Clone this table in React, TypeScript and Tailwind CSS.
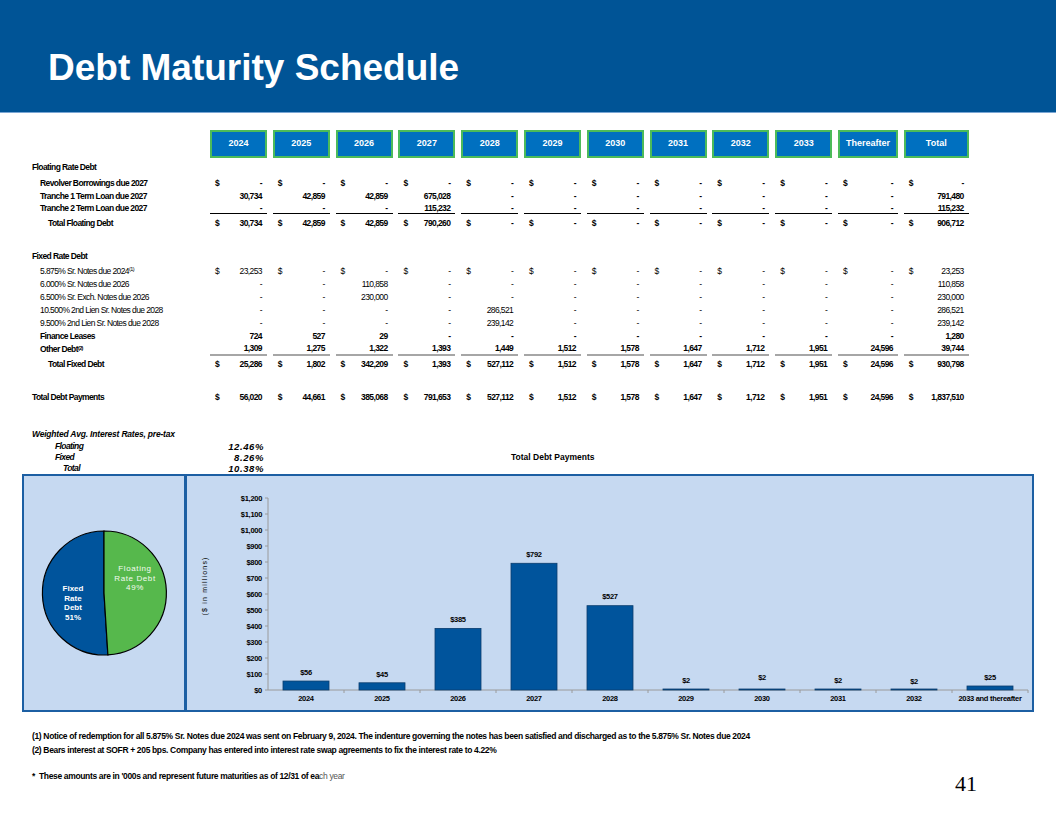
import React from "react";

type Row = {
  label: string;
  sup?: string;
  values: string[];
  dollar?: boolean;
  indent: string;
  bold?: boolean;
  size: string;
  line?: "black" | "gray";
};

const years = ["2024", "2025", "2026", "2027", "2028", "2029", "2030", "2031", "2032", "2033", "Thereafter", "Total"];

const dashes = (n: number) => Array.from({ length: n }, () => "-");

const floatingRows: Row[] = [
  { label: "Revolver Borrowings due 2027", values: dashes(12), dollar: true, indent: "pl-[40px]", bold: true, size: "mt-[3px] h-[13px]" },
  { label: "Tranche 1 Term Loan due 2027", values: ["30,734", "42,859", "42,859", "675,028", ...dashes(7), "791,480"], indent: "pl-[40px]", bold: true, size: "h-[13.5px]" },
  { label: "Tranche 2 Term Loan due 2027", values: ["-", "-", "-", "115,232", ...dashes(7), "115,232"], indent: "pl-[40px]", bold: true, size: "h-[11px]", line: "black" },
  { label: "Total Floating Debt", values: ["30,734", "42,859", "42,859", "790,260", ...dashes(7), "906,712"], dollar: true, indent: "pl-[48px]", bold: true, size: "mt-[2.5px] h-[13px]" },
];

const fixedRows: Row[] = [
  { label: "5.875% Sr. Notes due 2024", sup: "(1)", values: ["23,253", ...dashes(10), "23,253"], dollar: true, indent: "pl-[40px]", size: "mt-[2px] h-[13px]" },
  { label: "6.000% Sr. Notes due 2026", values: ["-", "-", "110,858", ...dashes(8), "110,858"], indent: "pl-[40px]", size: "h-[13px]" },
  { label: "6.500% Sr. Exch. Notes due 2026", values: ["-", "-", "230,000", ...dashes(8), "230,000"], indent: "pl-[40px]", size: "h-[13px]" },
  { label: "10.500% 2nd Lien Sr. Notes due 2028", values: ["-", "-", "-", "-", "286,521", ...dashes(6), "286,521"], indent: "pl-[40px]", size: "h-[13px]" },
  { label: "9.500% 2nd Lien Sr. Notes due 2028", values: ["-", "-", "-", "-", "239,142", ...dashes(6), "239,142"], indent: "pl-[40px]", size: "h-[13px]" },
  { label: "Finance Leases", values: ["724", "527", "29", ...dashes(8), "1,280"], indent: "pl-[40px]", bold: true, size: "h-[13.5px]" },
  { label: "Other Debt", sup: "(2)", values: ["1,309", "1,275", "1,322", "1,393", "1,449", "1,512", "1,578", "1,647", "1,712", "1,951", "24,596", "39,744"], indent: "pl-[40px]", bold: true, size: "h-[13px]", line: "gray" },
  { label: "Total Fixed Debt", values: ["25,286", "1,802", "342,209", "1,393", "527,112", "1,512", "1,578", "1,647", "1,712", "1,951", "24,596", "930,798"], dollar: true, indent: "pl-[48px]", bold: true, size: "mt-[2px] h-[13px]" },
];

const totalRow: Row = {
  label: "Total Debt Payments",
  values: ["56,020", "44,661", "385,068", "791,653", "527,112", "1,512", "1,578", "1,647", "1,712", "1,951", "24,596", "1,837,510"],
  dollar: true,
  indent: "pl-[32px]",
  bold: true,
  size: "mt-[20px] h-[13px]",
};

// bar chart data, in $ millions
const bars = [
  { label: "2024", value: 56, text: "$56" },
  { label: "2025", value: 45, text: "$45" },
  { label: "2026", value: 385, text: "$385" },
  { label: "2027", value: 792, text: "$792" },
  { label: "2028", value: 527, text: "$527" },
  { label: "2029", value: 2, text: "$2" },
  { label: "2030", value: 2, text: "$2", lift: 3 },
  { label: "2031", value: 2, text: "$2" },
  { label: "2032", value: 2, text: "$2", lift: -1 },
  { label: "2033 and thereafter", value: 25, text: "$25" },
];

const gridCols = "grid grid-cols-[204.2px_repeat(10,57px)_60px_65px] gap-x-[5.8px]";
const narrow = "font-['Liberation_Sans_Narrow','Liberation_Sans',Arial,sans-serif]";

function TableRow({ row }: { row: Row }) {
  return (
    <div className={`${gridCols} ${row.size} items-center`}>
      <div className={`${row.indent} ${row.bold ? "font-bold" : ""} whitespace-nowrap`}>
        {row.label}
        {row.sup ? <sup className="text-[5.5px]">{row.sup}</sup> : null}
      </div>
      {row.values.map((value, i) => (
        <div
          key={i}
          className={`flex h-full items-center justify-between px-[5px] ${row.bold ? "font-bold" : ""} ${
            row.line === "black" ? "border-b border-black" : row.line === "gray" ? "border-b-2 border-[#a6a6a6]" : ""
          }`}
        >
          <span>{row.dollar ? "$" : ""}</span>
          <span>{value}</span>
        </div>
      ))}
    </div>
  );
}

function BarChart() {
  const axisX = 81;
  const baseY = 214;
  const step = 76;
  const ticks = Array.from({ length: 13 }, (_, i) => i);

  return (
    <svg width="845" height="234" className={`${narrow} font-bold`} letterSpacing="-0.3">
      <text
        x="18"
        y="110"
        transform="rotate(-90 18 110)"
        textAnchor="middle"
        fontSize="7"
        fontWeight="normal"
        letterSpacing="1.2"
        dominantBaseline="middle"
      >
        ($ in millions)
      </text>

      {ticks.map((i) => {
        const y = baseY - i * 16;
        const label = i === 0 ? "$0" : `$${(i * 100).toLocaleString("en-US")}`;
        return (
          <g key={i}>
            <text x="75" y={y + 2.7} textAnchor="end" fontSize="7.5">
              {label}
            </text>
            <line x1={axisX - 3} x2={axisX} y1={y} y2={y} stroke="#9a9a9a" strokeWidth="1" />
          </g>
        );
      })}

      <line x1={axisX} x2={axisX} y1={22} y2={baseY} stroke="#9a9a9a" strokeWidth="1" />
      <line x1={axisX} x2={axisX + step * 10} y1={baseY} y2={baseY} stroke="#9a9a9a" strokeWidth="1" />
      {bars.map((_, i) => (
        <line key={i} x1={axisX + step * (i + 1)} x2={axisX + step * (i + 1)} y1={baseY} y2={baseY + 3} stroke="#9a9a9a" strokeWidth="1" />
      ))}

      {bars.map((bar, i) => {
        const cx = axisX + step / 2 + step * i;
        const h = Math.max(bar.value * 0.16, 1);
        const top = baseY - h;
        return (
          <g key={bar.label}>
            <rect x={cx - 23} y={top} width="46" height={h} fill="#00549c" stroke="#0a3d6e" strokeWidth="0.8" />
            <text x={cx} y={top - 6.3 - (bar.lift ?? 0)} textAnchor="middle" fontSize="7.5">
              {bar.text}
            </text>
            <text x={cx} y={baseY + 11} textAnchor="middle" fontSize="7.5">
              {bar.label}
            </text>
          </g>
        );
      })}
    </svg>
  );
}

function PieChart() {
  return (
    <svg width="160" height="234" className={narrow}>
      <path d="M80 117 L83.9 178.9 A62 62 0 1 1 80 55 Z" fill="#00549c" stroke="#000" strokeWidth="1.2" />
      <path d="M80 117 L80 55 A62 62 0 0 1 83.9 178.9 Z" fill="#56b84c" stroke="#000" strokeWidth="1.2" />
      <g fill="#ffffff" fontSize="8" fontWeight="bold" textAnchor="middle">
        <text x="49" y="115">Fixed</text>
        <text x="49" y="124.5">Rate</text>
        <text x="49" y="134">Debt</text>
        <text x="49" y="144">51%</text>
      </g>
      <g fill="#f4faf0" fontSize="8" textAnchor="middle" letterSpacing="0.6">
        <text x="111" y="95">Floating</text>
        <text x="111" y="105">Rate Debt</text>
        <text x="111" y="114">49%</text>
      </g>
    </svg>
  );
}

export default function App() {
  return (
    <main className="relative h-[816px] w-[1056px] overflow-hidden bg-white text-black">
      <header className="h-[113px] border-b border-[#7aa6d4] bg-[#005496] pl-[48px] pt-[49px]">
        <h1 className="font-['Liberation_Sans',Arial,sans-serif] text-[37px] font-bold leading-[37px] text-white">
          Debt Maturity Schedule
        </h1>
      </header>

      <section className={`${narrow} text-[8.5px] leading-none tracking-[-0.6px]`}>
        <div className={`${gridCols} mt-[16.5px] h-[28px]`}>
          <div />
          {years.map((year) => (
            <div
              key={year}
              className="flex items-center justify-center border-2 border-[#4cbb5a] bg-[#0070c0] font-['Liberation_Sans',Arial,sans-serif] text-[9px] font-bold tracking-normal text-white"
            >
              {year}
            </div>
          ))}
        </div>

        <div className="mt-[4px] flex h-[12px] items-center pl-[32px] font-bold">Floating Rate Debt</div>
        {floatingRows.map((row) => (
          <TableRow key={row.label} row={row} />
        ))}

        <div className="mt-[20px] flex h-[13px] items-center pl-[32px] font-bold">Fixed Rate Debt</div>
        {fixedRows.map((row) => (
          <TableRow key={row.label} row={row} />
        ))}

        <TableRow row={totalRow} />

        <div className="mt-[24px] flex h-[12px] items-center pl-[32px] font-bold italic tracking-[-0.2px]">
          Weighted Avg. Interest Rates, pre-tax
        </div>
        <div className="mt-[1px] flex h-[11px] items-center font-bold italic">
          <div className="w-[210px] pl-[55px]">Floating</div>
          <div className="w-[57px] pr-[3px] text-right text-[9.5px] tracking-[0.6px]">12.46%</div>
        </div>
        <div className="flex h-[11px] items-center font-bold italic">
          <div className="w-[210px] pl-[55px]">Fixed</div>
          <div className="w-[57px] pr-[3px] text-right text-[9.5px] tracking-[0.6px]">8.26%</div>
          <div className="ml-[244px] not-italic tracking-normal">Total Debt Payments</div>
        </div>
        <div className="flex h-[11px] items-center font-bold italic">
          <div className="w-[210px] pl-[63px]">Total</div>
          <div className="w-[57px] pr-[3px] text-right text-[9.5px] tracking-[0.6px]">10.38%</div>
        </div>
      </section>

      <section className="ml-[22px] flex h-[238px] w-[1012px] border-2 border-[#1c5fa3] bg-[#c6d9f1]">
        <div className="w-[163px] border-r-[3px] border-[#1c5fa3]">
          <PieChart />
        </div>
        <div className="flex-1">
          <BarChart />
        </div>
      </section>

      <footer className={`${narrow} pl-[32px] text-[8.5px] font-bold leading-none tracking-[-0.35px]`}>
        <p className="mt-[18px] flex h-[12px] items-center">
          (1) Notice of redemption for all 5.875% Sr. Notes due 2024 was sent on February 9, 2024. The indenture governing the notes has been satisfied and discharged as to the 5.875% Sr. Notes due 2024
        </p>
        <p className="mt-[2px] flex h-[12px] items-center">
          (2) Bears interest at SOFR + 205 bps. Company has entered into interest rate swap agreements to fix the interest rate to 4.22%
        </p>
        <div className="mt-[14px] flex items-start justify-between pr-[79px]">
          <p className="flex h-[12px] items-center">
            *&nbsp; These amounts are in &apos;000s and represent future maturities as of 12/31 of ea
            <span className="font-normal text-[#555]">ch year</span>
          </p>
          <span className="mt-[3px] font-['Liberation_Serif','Times_New_Roman',serif] text-[22px] font-normal leading-none tracking-normal">
            41
          </span>
        </div>
      </footer>
    </main>
  );
}
